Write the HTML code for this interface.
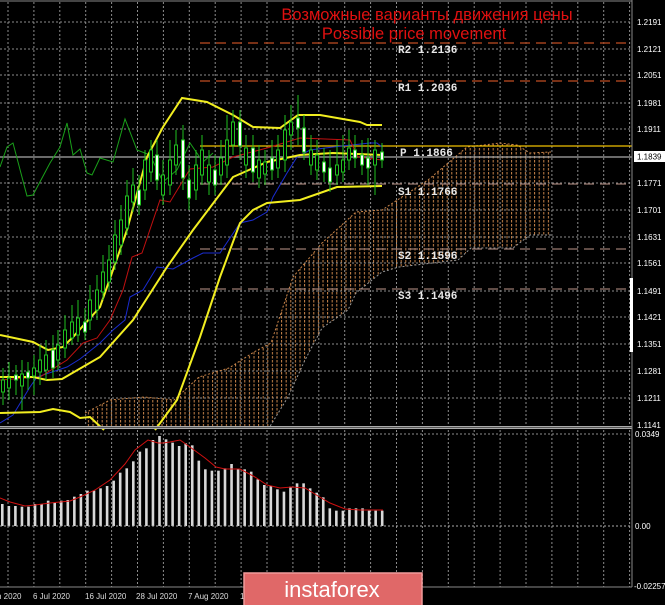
<!DOCTYPE html>
<html><head><meta charset="utf-8"><style>
html,body{margin:0;padding:0;background:#000;width:665px;height:605px;overflow:hidden;font-family:"Liberation Sans","Noto Sans CJK SC",sans-serif}
svg{display:block}
.ax{fill:#fff;font-size:8px;font-family:"Liberation Sans",sans-serif}
.lv{fill:#e8e8e8;font-size:11px;font-family:"Liberation Mono",monospace;font-weight:bold}
.dt{fill:#ddd;font-size:8px;font-family:"Liberation Sans",sans-serif}
</style></head><body>
<svg id="s" width="665" height="605" xmlns="http://www.w3.org/2000/svg">
<defs>
<pattern id="cl" width="4.6" height="4" patternUnits="userSpaceOnUse">
<line x1="1" y1="0" x2="1" y2="2.5" stroke="#c9854a" stroke-width="1"/>
</pattern>
</defs>
<rect width="665" height="605" fill="#000"/>
<g id="grid" stroke="#bbb" stroke-width="1" stroke-dasharray="2,2" opacity="0.75"></g>
<line x1="0" y1="1" x2="632" y2="1" stroke="#888"/>
<polygon fill="url(#cl)" points="85,428 85,413 110,400 144,397 174,400 199,377 229,368 254,352 271,343 293,277 322,243 356,212 382,210 428,180 467,147 500,143 517,145 530,153 551,152 551,235 530,235 513,248 471,248 458,260 399,267 382,272 356,293 348,310 322,328 305,360 288,397 269,428"/>
<polyline fill="none" stroke="#c9854a" stroke-dasharray="2,2" points="85,413 110,400 144,397 174,400 199,377 229,368 254,352 271,343 293,277 322,243 356,212 382,210 428,180 467,147 500,143 517,145 530,153 551,152"/>
<polyline fill="none" stroke="#999" stroke-dasharray="2,2" points="551,235 530,235 513,248 471,248 458,260 399,267 382,272 356,293 348,310 322,328 305,360 288,397 269,428"/>
<g stroke="#a0401c" stroke-width="1.5" stroke-dasharray="10,6">
<line x1="200" y1="43" x2="632" y2="43"/><line x1="200" y1="81" x2="632" y2="81"/>
</g>
<g stroke="#9a7a70" stroke-width="1.2" stroke-dasharray="10,6">
<line x1="200" y1="184" x2="632" y2="184"/><line x1="200" y1="249" x2="632" y2="249"/><line x1="200" y1="289" x2="632" y2="289"/>
</g>
<line x1="0" y1="157" x2="632" y2="157" stroke="#aaa" stroke-width="1.2"/>
<line x1="200" y1="146" x2="632" y2="146" stroke="#f0c000" stroke-width="1.2"/>
<text class="lv" x="398" y="53">R2 1.2136</text>
<text class="lv" x="398" y="91">R1 1.2036</text>
<text class="lv" x="400" y="156">P 1.1866</text>
<text class="lv" x="398" y="195">S1 1.1766</text>
<text class="lv" x="398" y="259">S2 1.1596</text>
<text class="lv" x="398" y="299">S3 1.1496</text>
<polyline fill="none" stroke="#1aa01a" stroke-width="1" points="0,167 7,147 13,143 27,196 33,195 50,163 60,147 67,123 73,155 80,149 87,173 92,175 100,158 113,162 125,119 137,150 150,155 163,182 177,170 190,143 203,162 213,153"/>
<polyline fill="none" stroke="#1a2cd0" stroke-width="1" points="0,423 13,415 30,387 37,377 67,367 80,359 100,343 113,330 125,320 130,297 143,290 157,267 173,269 193,258 203,253 220,253 240,223 253,220 267,212 273,197 287,173 297,157 310,150 333,147 370,143 377,143 382,147"/>
<polyline fill="none" stroke="#c01010" stroke-width="1" points="0,380 40,377 67,360 83,343 97,338 110,320 123,290 132,257 142,253 160,200 170,202 190,169 213,167 233,157 267,148 300,138 350,140 358,157 382,160"/>
<g fill="none" stroke="#f2ee20" stroke-width="2">
<polyline points="0,335 33,342 48,350 63,347 73,337 100,307 127,230 147,157 163,127 182,98 207,102 233,115 253,127 280,128 298,115 320,115 360,122 367,125 382,125"/>
<polyline points="0,377 33,377 47,380 62,379 100,357 133,320 167,267 193,230 233,177 267,162 300,155 333,153 382,155"/>
<polyline points="0,413 40,412 53,409 70,412 80,418 90,417 104,430"/>
<polyline points="155,430 177,400 200,337 220,277 240,223 253,210 267,203 300,200 320,193 337,187 382,186"/>
</g>
<g id="cdl"></g>
<text x="427" y="20" fill="#e01010" font-size="16.5" text-anchor="middle">Возможные варианты движения цены</text>
<text x="414" y="39" fill="#e01010" font-size="16.5" text-anchor="middle">Possible price movement</text>
<rect x="0" y="426" width="632" height="3" fill="#aaa"/>
<line x1="0" y1="427.5" x2="632" y2="427.5" stroke="#555"/>
<g id="bars"></g>
<polyline fill="none" stroke="#d01010" stroke-width="1" points="0,498 10,502 25,506 35,505 50,503 70,501 80,497 95,490 110,480 125,464 135,450 148,440 158,443 163,443 170,442 180,440 190,447 205,458 216,467 225,469 240,469 255,477 267,485 280,488 292,487 305,488 318,496 330,503 345,509 360,510 383,510"/>
<line x1="0" y1="526" x2="632" y2="526" stroke="#aaa" stroke-dasharray="2,2"/>
<line x1="0" y1="587" x2="632" y2="587" stroke="#888"/>
<line x1="632" y1="0" x2="632" y2="587" stroke="#888"/>
<rect x="630" y="278" width="3" height="74" fill="#fff"/>
<g class="ax">
<text x="637" y="25">1.2191</text><text x="637" y="52">1.2121</text><text x="637" y="78">1.2051</text><text x="637" y="106">1.1981</text><text x="637" y="132">1.1911</text><text x="637" y="186">1.1771</text><text x="637" y="213">1.1701</text><text x="637" y="240">1.1631</text><text x="637" y="266">1.1561</text><text x="637" y="294">1.1491</text><text x="637" y="320">1.1421</text><text x="637" y="347">1.1351</text><text x="637" y="374">1.1281</text><text x="637" y="401">1.1211</text><text x="637" y="428">1.1141</text>
<text x="635" y="437">0.0349</text><text x="635" y="529">0.00</text><text x="634" y="589">-0.02257</text>
</g>
<rect x="634" y="151" width="31" height="11" fill="#fff"/>
<text x="637" y="159.5" font-size="8" fill="#000">1.1839</text>
<g class="dt">
<text x="-3" y="599">n 2020</text><text x="33" y="599">6 Jul 2020</text><text x="85" y="599">16 Jul 2020</text><text x="136" y="599">28 Jul 2020</text><text x="188" y="599">7 Aug 2020</text><text x="240" y="599">1</text>
</g>
<rect x="244" y="573" width="178" height="33" fill="#e06868" stroke="#f09a9a" stroke-width="1.5"/>
<text x="332" y="597" fill="#fff" font-size="22" text-anchor="middle">instaforex</text>
</svg>
<script>
var NS="http://www.w3.org/2000/svg";
function el(p,t,a){var e=document.createElementNS(NS,t);for(var k in a)e.setAttribute(k,a[k]);p.appendChild(e);return e;}
var g=document.getElementById("grid");
[22,49,75,103,129,183,210,237,263,291,317,344,371,398,434].forEach(function(y){el(g,"line",{x1:0,y1:y,x2:632,y2:y});});
for(var x=8;x<632;x+=25.9){el(g,"line",{x1:x,y1:2,x2:x,y2:426});el(g,"line",{x1:x,y1:430,x2:x,y2:587});}
var b=document.getElementById("bars");
var tops=[612,618,618,620,620,612,612,602,608,602,600,590,582,572,572,565,558,542,518,505,484,455,445,420,408,418,428,438,430,436,482,508,512,512,505,492,508,508,515,538,555,558,568,575,560,550,550,565,578,592,625,632,632,625,625,625,632,632,632];
tops.forEach(function(t,i){var y=300+t/3;el(b,"rect",{x:1+i*6.55,y:y,width:2.6,height:526-y,fill:"#d8d8d8"});});
var c=document.getElementById("cdl");
var C=[[3,380,392,368,405,0],[9,378,388,362,400,0],[16,375,380,365,395,1],[22,374,386,360,410,0],[28,372,378,362,390,1],[34,368,376,355,395,0],[40,360,372,345,385,0],[46,355,370,340,380,0],[53,350,368,335,378,1],[58,345,360,330,370,0],[65,330,348,315,358,0],[72,322,338,305,345,0],[78,318,335,300,342,0],[85,322,332,308,340,1],[90,300,320,285,330,0],[97,290,310,275,320,0],[103,272,292,255,300,0],[109,260,282,245,290,0],[115,235,262,220,270,0],[121,220,245,205,255,0],[127,196,228,180,235,0],[133,185,202,168,212,0],[139,190,205,175,215,1],[145,160,190,150,200,0],[151,150,172,140,182,0],[157,155,180,140,190,1],[163,175,195,160,205,0],[170,160,185,140,195,0],[176,145,165,130,175,0],[183,140,178,125,190,1],[189,180,198,165,210,1],[196,165,190,150,200,0],[202,150,175,135,185,0],[209,165,182,150,195,0],[215,170,185,155,195,1],[221,158,175,140,185,0],[227,140,165,115,178,0],[233,122,145,110,155,0],[240,122,146,110,160,1],[246,148,165,135,178,0],[253,148,172,135,182,1],[259,160,178,145,188,0],[265,162,174,150,185,0],[272,158,170,140,180,1],[278,150,168,135,178,0],[285,130,160,115,172,0],[291,122,135,105,150,0],[298,118,128,95,145,1],[304,128,152,115,160,1],[311,150,165,135,175,0],[317,155,170,140,180,0],[324,162,172,148,182,1],[330,168,182,150,192,1],[337,165,175,140,185,0],[343,160,172,135,182,0],[349,148,160,130,170,0],[355,150,158,135,168,1],[362,155,165,140,175,1],[368,158,168,138,185,1],[375,150,165,140,195,0],[382,152,160,143,168,1]];
C.forEach(function(k){el(c,"line",{x1:k[0],y1:k[3],x2:k[0],y2:k[4],stroke:"#20c020","stroke-width":1});el(c,"rect",{x:k[0]-1.5,y:k[1],width:3,height:k[2]-k[1],fill:k[5]?"#fff":"#000",stroke:"#20c020","stroke-width":1});});
</script>
</body></html>
